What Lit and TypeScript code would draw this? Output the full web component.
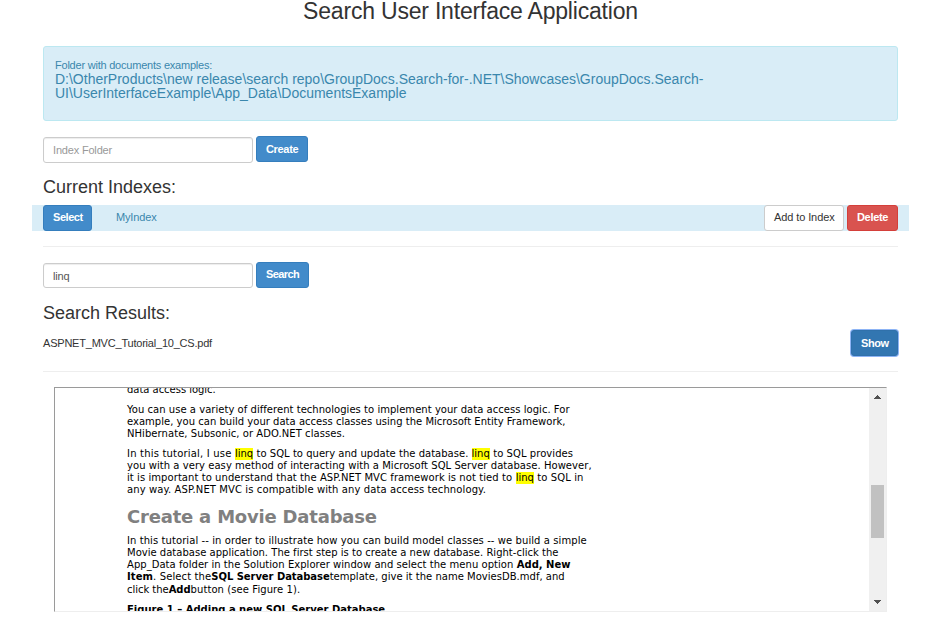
import { LitElement, html, css, TemplateResult } from "lit";
import { customElement, property, state } from "lit/decorators.js";
import { classMap } from "lit/directives/class-map.js";

type Run = { text: string; kind?: "mark" | "bold"; track: number; gap?: number };
type Block = { kind: "para" | "title" | "para steps"; lines: Run[][] };

const line = (text: string, track: number): Run[] => [{ text, track }];

const PAGE: Block[] = [
  { kind: "para", lines: [line("data access logic.", -0.03)] },
  {
    kind: "para",
    lines: [
      line("You can use a variety of different technologies to implement your data access logic. For", 0.035),
      line("example, you can build your data access classes using the Microsoft Entity Framework,", 0.02),
      line("NHibernate, Subsonic, or ADO.NET classes.", 0.06),
    ],
  },
  {
    kind: "para",
    lines: [
      [
        { text: "In this tutorial, I use", track: 0.19 },
        { text: "linq", kind: "mark", track: 0, gap: 3.4 },
        { text: "to SQL to query and update the database.", track: 0.02, gap: 3.4 },
        { text: "linq", kind: "mark", track: 0, gap: 3.2 },
        { text: "to SQL provides", track: 0.06, gap: 3.4 },
      ],
      line("you with a very easy method of interacting with a Microsoft SQL Server database. However,", 0.045),
      [
        { text: "it is important to understand that the ASP.NET MVC framework is not tied to", track: 0.067 },
        { text: "linq", kind: "mark", track: 0, gap: 3.6 },
        { text: "to SQL in", track: 0.1, gap: 3.4 },
      ],
      line("any way. ASP.NET MVC is compatible with any data access technology.", 0.1),
    ],
  },
  { kind: "title", lines: [line("Create a Movie Database", -0.2)] },
  {
    kind: "para steps",
    lines: [
      line("In this tutorial -- in order to illustrate how you can build model classes -- we build a simple", 0.08),
      line("Movie database application. The first step is to create a new database. Right-click the", 0.015),
      [
        { text: "App_Data folder in the Solution Explorer window and select the menu option", track: 0.04 },
        { text: "Add, New", kind: "bold", track: 0, gap: 3.4 },
      ],
      [
        { text: "Item", kind: "bold", track: 0.1 },
        { text: ". Select the", track: 0.12 },
        { text: "SQL Server Database", kind: "bold", track: -0.06 },
        { text: "template, give it the name MoviesDB.mdf, and", track: 0.02 },
      ],
      [
        { text: "click the", track: -0.03 },
        { text: "Add", kind: "bold", track: -0.05 },
        { text: "button (see Figure 1).", track: 0.08 },
      ],
    ],
  },
  { kind: "para", lines: [[{ text: "Figure 1 – Adding a new SQL Server Database", kind: "bold", track: 0 }]] },
];

@customElement("ui-button")
class UiButton extends LitElement {
  static styles = css`
    :host { display: block; flex: none; }
    .btn {
      box-sizing: border-box; display: block; width: 100%; height: 26px; margin: 0; padding: 0 0 0 9px;
      border: 1px solid #357ebd; border-radius: 3px; background: #428bca; color: #fff;
      font: bold 11px/24px "Liberation Sans", Arial, sans-serif; text-align: left; white-space: nowrap;
    }
    .danger { background: #d9534f; border-color: #d43f3a; }
    .plain { background: #fff; border-color: #ccc; color: #333; font-weight: normal; }
    .active { background: #3276b1; border-color: #3071ab; box-shadow: 0 0 0 1px #8db4f5; }
    .raised { padding-bottom: 2px; line-height: 22px; }
  `;
  @property() label = "";
  @property() variant = "primary";
  @property({ type: Number }) track = 0;
  @property({ type: Boolean }) raised = false;
  render() {
    return html`<button class=${classMap({ btn: true, [this.variant]: true, raised: this.raised })}
      style="letter-spacing:${this.track}px">${this.label}</button>`;
  }
}

@customElement("doc-viewer")
class DocViewer extends LitElement {
  static styles = css`
    :host {
      box-sizing: border-box; display: flex; height: 225px; overflow: hidden; background: #fff;
      border: 1px solid; border-color: #9a9a9a #eee #eee #9a9a9a;
    }
    .page {
      flex: 1; min-width: 0; overflow: hidden; padding-left: 72px; color: #000;
      font: 10px/12px "DejaVu Sans", Verdana, sans-serif;
    }
    .para { margin-bottom: 8px; }
    .para:first-child { margin-top: -4px; }
    .line { height: 12px; display: flex; white-space: pre; }
    .steps .line:last-child { margin-top: 1px; }
    .title { margin: 10px 0 7px; }
    .title .line { height: 22px; font-size: 18px; line-height: 22px; font-weight: bold; color: #808080; }
    .mark { background: #ff0; }
    .bold { font-weight: bold; }
    .bar {
      flex: none; width: 17px; background: #f0f0f0; display: flex; flex-direction: column; align-items: center;
    }
    .arrow { display: block; width: 7px; height: 4px; fill: #505050; }
    .up { margin-top: 7px; }
    .thumb { width: 13px; height: 53px; margin-top: 86px; background: #c1c1c1; }
    .down { margin-top: 62px; }
  `;
  private run(r: Run): TemplateResult {
    return html`<span class=${r.kind ?? "text"}
      style="letter-spacing:${r.track}px;margin-left:${r.gap ?? 0}px">${r.text}</span>`;
  }
  render() {
    return html`
      <div class="page">
        ${PAGE.map((b) => html`<div class=${b.kind}>${b.lines.map((l) => html`<div class="line">${l.map((r) => this.run(r))}</div>`)}</div>`)}
      </div>
      <div class="bar">
        <svg class="arrow up" viewBox="0 0 7 4" shape-rendering="crispEdges"><path d="M3 0h1v1h1v1h1v1h1v1H0V3h1V2h1V1h1z" /></svg>
        <div class="thumb"></div>
        <svg class="arrow down" viewBox="0 0 7 4" shape-rendering="crispEdges"><path d="M0 0h7v1H6v1H5v1H4v1H3V3H2V2H1V1H0z" /></svg>
      </div>`;
  }
}

@customElement("app-root")
class AppRoot extends LitElement {
  static styles = css`
    :host {
      box-sizing: border-box; display: block; width: 940px; height: 624px; overflow: hidden; background: #fff;
      color: #333; padding: 0 42px 0 43px; font: 11px/14px "Liberation Sans", Arial, sans-serif;
    }
    h1, h2 { margin: 0; font-weight: normal; }
    h1 { font-size: 23px; line-height: 22px; height: 46px; text-align: center; letter-spacing: -0.2px; }
    h2 { font-size: 18px; line-height: 20px; }
    .alert {
      box-sizing: border-box; height: 75px; padding: 11px; border: 1px solid #bce8f1; border-radius: 3px;
      background: #d9edf7; color: #3a87ad;
    }
    .caption { letter-spacing: -0.22px; }
    .path { font-size: 14px; letter-spacing: -0.005px; }
    .form { display: flex; align-items: flex-start; gap: 3px; }
    .create { margin: 15px 0 14px; height: 27px; }
    .search { margin: 15px 0 15px; }
    .field {
      box-sizing: border-box; width: 210px; height: 26px; margin: 1px 0 0; padding: 0 9px; border: 1px solid #ccc;
      border-radius: 3px; background: #fff; color: #555; outline: none; letter-spacing: -0.18px;
      font: 11px "Liberation Sans", Arial, sans-serif; box-shadow: inset 0 1px 1px rgba(0, 0, 0, 0.075);
    }
    .search .field { height: 25px; }
    .field::placeholder { color: #999; opacity: 1; }
    .index {
      display: flex; gap: 3px; height: 26px; margin: 8px -11px 0; padding: 0 11px; background: #d9edf7; color: #3a87ad;
    }
    .name { flex: 1; padding-left: 21px; line-height: 24px; letter-spacing: -0.15px; }
    .rule { height: 1px; margin: 15px 0 0; background: #eee; }
    .result { display: flex; justify-content: space-between; height: 26px; margin-top: 7px; line-height: 26px; letter-spacing: -0.21px; }
    .w-create { width: 52px; } .w-search { width: 53px; } .w-select { width: 49px; }
    .w-add { width: 80px; } .w-delete { width: 51px; } .w-show { width: 47px; }
    doc-viewer { margin: 15px 11px 0; }
  `;
  @state() private query = "linq";
  render() {
    return html`
      <h1>Search User Interface Application</h1>
      <div class="alert">
        <div class="caption">Folder with documents examples:</div>
        <div class="path">
          D:\\OtherProducts\\new release\\search repo\\GroupDocs.Search-for-.NET\\Showcases\\GroupDocs.Search-<br />UI\\UserInterfaceExample\\App_Data\\DocumentsExample
        </div>
      </div>
      <div class="form create">
        <input class="field" placeholder="Index Folder" />
        <ui-button class="w-create" label="Create" track="-0.33"></ui-button>
      </div>
      <h2>Current Indexes:</h2>
      <div class="index">
        <ui-button class="w-select" label="Select" track="-0.45" raised></ui-button>
        <div class="name">MyIndex</div>
        <ui-button class="w-add" variant="plain" label="Add to Index" track="-0.1" raised></ui-button>
        <ui-button class="w-delete" variant="danger" label="Delete" track="-0.33" raised></ui-button>
      </div>
      <div class="rule"></div>
      <div class="form search">
        <input class="field" .value=${this.query} />
        <ui-button class="w-search" label="Search" track="-0.58" raised></ui-button>
      </div>
      <h2>Search Results:</h2>
      <div class="result">
        <span>ASPNET_MVC_Tutorial_10_CS.pdf</span>
        <ui-button class="w-show" variant="active" label="Show" track="-0.45"></ui-button>
      </div>
      <div class="rule"></div>
      <doc-viewer></doc-viewer>`;
  }
}
